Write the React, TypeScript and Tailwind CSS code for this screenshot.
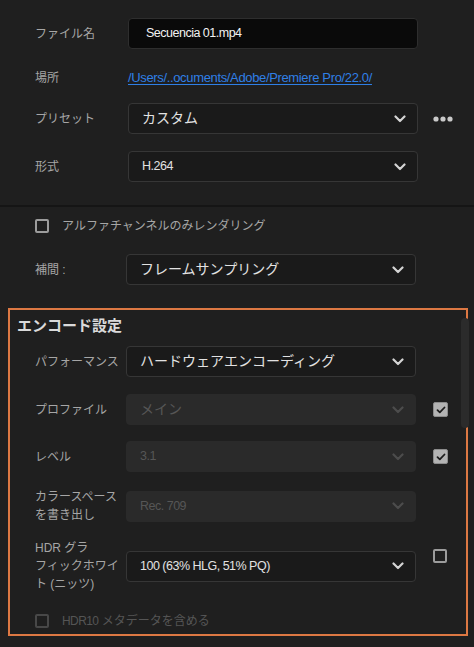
import React from "react";

const FONT = { fontFamily: '"Liberation Sans", "Noto Sans CJK JP", sans-serif' };

function Chevron({ disabled }: { disabled?: boolean }) {
  return (
    <svg width="12" height="8" viewBox="0 0 12 8" className="shrink-0">
      <polyline
        points="1.5,1.5 6,6 10.5,1.5"
        fill="none"
        stroke={disabled ? "#4c4c4c" : "#d4d4d4"}
        strokeWidth="2.2"
        strokeLinecap="round"
        strokeLinejoin="round"
      />
    </svg>
  );
}

function Select({
  value,
  disabled,
  big,
}: {
  value: string;
  disabled?: boolean;
  big?: boolean;
}) {
  return (
    <div
      className={`flex h-[31px] w-[290px] shrink-0 items-center justify-between rounded-[4px] border pl-[13px] pr-[11px] ${
        disabled
          ? "border-[#2a2a2a] bg-[#2a2a2a] text-[#565656]"
          : "border-[#363636] bg-[#1a1a1a] text-[#e2e2e2]"
      }`}
    >
      <span className={big ? "text-[14px]" : "text-[12.5px] tracking-[-0.5px]"}>{value}</span>
      <Chevron disabled={disabled} />
    </div>
  );
}

function Checkbox({ checked, disabled }: { checked?: boolean; disabled?: boolean }) {
  if (checked) {
    return (
      <div className="flex h-[15px] w-[15px] shrink-0 items-center justify-center rounded-[2px] border border-[#8c8c8c] bg-[#b3b3b3]">
        <svg width="10" height="8" viewBox="0 0 10 8">
          <polyline
            points="1.5,4.2 3.8,6.4 8.5,1.5"
            fill="none"
            stroke="#1c1c1c"
            strokeWidth="1.8"
            strokeLinecap="round"
            strokeLinejoin="round"
          />
        </svg>
      </div>
    );
  }
  return (
    <div
      className={`h-[14px] w-[14px] shrink-0 rounded-[2px] border-2 ${
        disabled ? "border-[#484848]" : "border-[#9c9c9c]"
      }`}
    />
  );
}

function Label({ children, className = "" }: { children: React.ReactNode; className?: string }) {
  return (
    <div className={`shrink-0 text-[12px] leading-[18px] text-[#a6a6a6] ${className}`}>{children}</div>
  );
}

export default function App() {
  return (
    <div className="relative h-[647px] w-[474px] overflow-hidden bg-[#1f1f1f]" style={FONT}>
      <div className="pl-[35px] pt-[18px]">
        <div className="flex h-[31px] items-center">
          <Label className="w-[93px]">ファイル名</Label>
          <div className="flex h-[31px] w-[290px] items-center rounded-[4px] border border-[#2e2e2e] bg-[#0a0a0a] pl-[17px] text-[12.5px] tracking-[-0.5px] text-[#f2f2f2]">
            Secuencia 01.mp4
          </div>
        </div>

        <div className="mt-[13px] flex h-[31px] items-center">
          <Label className="w-[93px]">場所</Label>
          <a className="text-[13px] tracking-[-0.35px] text-[#2f7fe6] underline underline-offset-2">
            /Users/..ocuments/Adobe/Premiere Pro/22.0/
          </a>
        </div>

        <div className="mt-[10px] flex h-[31px] items-center">
          <Label className="w-[93px]">プリセット</Label>
          <Select value="カスタム" big />
          <svg width="20" height="6" viewBox="0 0 20 6" className="ml-[15px]">
            <circle cx="3" cy="3" r="2.6" fill="#c9c9c9" />
            <circle cx="10" cy="3" r="2.6" fill="#c9c9c9" />
            <circle cx="17" cy="3" r="2.6" fill="#c9c9c9" />
          </svg>
        </div>

        <div className="mt-[17px] flex h-[31px] items-center">
          <Label className="w-[93px]">形式</Label>
          <Select value="H.264" />
        </div>
      </div>

      <div className="mt-[23px] h-[2px] bg-[#151515]" />

      <div className="pl-[35px]">
        <div className="mt-[12px] flex h-[14px] items-center gap-[13px]">
          <Checkbox />
          <span className="text-[12px] text-[#a6a6a6]">アルファチャンネルのみレンダリング</span>
        </div>

        <div className="mt-[21px] flex h-[31px] items-center">
          <Label className="w-[91px]">補間 :</Label>
          <Select value="フレームサンプリング" big />
        </div>
      </div>

      <div className="relative ml-[8px] mr-[6px] mt-[23px] h-[328px] border-2 border-[#dd7843]">
        <div className="absolute right-[-3px] top-[8px] h-[110px] w-[8px] rounded-full bg-[#2b2b2b]" />
        <div className="relative pl-[7px] pt-[7px]">
          <div className="text-[15px] font-bold leading-[18px] text-[#dadada]">エンコード設定</div>
        </div>

        <div className="relative pl-[25px]">
          <div className="mt-[11px] flex h-[31px] items-center">
            <Label className="w-[91px]">パフォーマンス</Label>
            <Select value="ハードウェアエンコーディング" big />
          </div>

          <div className="mt-[17px] flex h-[31px] items-center">
            <Label className="w-[91px]">プロファイル</Label>
            <Select value="メイン" big disabled />
            <div className="ml-[17px]">
              <Checkbox checked />
            </div>
          </div>

          <div className="mt-[16px] flex h-[31px] items-center">
            <Label className="w-[91px]">レベル</Label>
            <Select value="3.1" disabled />
            <div className="ml-[17px]">
              <Checkbox checked />
            </div>
          </div>

          <div className="mt-[16px] flex h-[36px] items-center">
            <Label className="w-[91px]">
              カラースペース
              <br />
              を書き出し
            </Label>
            <Select value="Rec. 709" disabled />
          </div>

          <div className="mt-[15px] flex h-[54px] items-center">
            <Label className="w-[91px]">
              HDR グラ
              <br />
              フィックホワイ
              <br />
              ト (ニッツ)
            </Label>
            <Select value="100 (63% HLG, 51% PQ)" />
            <div className="mb-[20px] ml-[17px]">
              <Checkbox />
            </div>
          </div>

          <div className="mt-[21px] flex h-[14px] items-center gap-[13px]">
            <Checkbox disabled />
            <span className="text-[12px] text-[#555555]">
              <span className="tracking-[-0.6px]">HDR10</span> メタデータを含める
            </span>
          </div>
        </div>
      </div>
    </div>
  );
}
